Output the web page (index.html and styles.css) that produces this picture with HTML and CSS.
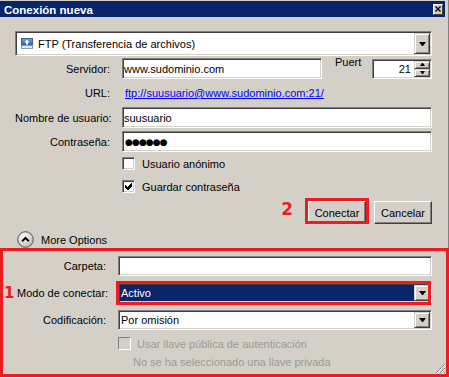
FILE: index.html
```html
<!DOCTYPE html>
<html lang="es">
<head>
    <meta charset="UTF-8">
    <title>Conexión nueva</title>
    <link rel="stylesheet" href="styles.css">
</head>
<body>
    <div class="window">
        <div class="titlebar">
            <span class="title">Conexión nueva</span>
            <span class="close-btn">
                <svg width="6" height="6" viewBox="0 0 6 6"><path d="M0.5 0.5 L5.5 5.5 M5.5 0.5 L0.5 5.5" stroke="#000" stroke-width="1.4"/></svg>
            </span>
        </div>

        <div class="combo protocol">
            <div class="combo-value">
                <svg class="ftp-icon" width="12" height="11" viewBox="0 0 12 11">
                    <defs>
                        <linearGradient id="ftpBlue" x1="0" y1="0" x2="0" y2="1">
                            <stop offset="0" stop-color="#7aa3dc"/>
                            <stop offset="1" stop-color="#2c5ca8"/>
                        </linearGradient>
                    </defs>
                    <rect x="0.5" y="0.5" width="11" height="7" fill="url(#ftpBlue)" stroke="#3a5f9a"/>
                    <rect x="0.5" y="7.5" width="11" height="3" fill="#dfe6ef" stroke="#8a9bb4"/>
                    <path d="M6 1.5 L8.5 4.5 L7 4.5 L7 6.5 L5 6.5 L5 4.5 L3.5 4.5 Z" fill="#fff"/>
                </svg>
                FTP (Transferencia de archivos)
            </div>
            <span class="drop-btn"></span>
        </div>

        <div class="row server-row">
            <span class="label">Servidor:</span>
            <div class="edit server">www.sudominio.com</div>
            <span class="port-label">Puert</span>
            <div class="spinner">
                <span class="spin-value">21</span>
                <span class="spin-btns">
                    <span class="spin-btn up"></span>
                    <span class="spin-btn down"></span>
                </span>
            </div>
        </div>

        <div class="row url-row">
            <span class="label">URL:</span>
            <a class="url" href="#">ftp://suusuario@www.sudominio.com:21/</a>
        </div>

        <div class="row">
            <span class="label">Nombre de usuario:</span>
            <div class="edit wide">suusuario</div>
        </div>

        <div class="row pass-row">
            <span class="label">Contraseña:</span>
            <div class="edit wide password">●●●●●●</div>
        </div>

        <div class="check-row anon">
            <span class="checkbox"></span>
            <span>Usuario anónimo</span>
        </div>
        <div class="check-row save">
            <span class="checkbox">
                <svg width="7" height="7" viewBox="0 0 7 7" shape-rendering="crispEdges"><polygon points="0,2 2,4 6,0 7,0 7,3 3,7 2,7 0,5" fill="#000"/></svg>
            </span>
            <span>Guardar contraseña</span>
        </div>

        <div class="actions">
            <span class="marker marker-two">2</span>
            <button class="btn highlighted">Conectar</button>
            <button class="btn">Cancelar</button>
        </div>

        <div class="more-options">
            <svg class="expander" width="17" height="17" viewBox="0 0 17 17">
                <defs>
                    <radialGradient id="knob" cx="0.4" cy="0.35" r="0.7">
                        <stop offset="0" stop-color="#ffffff"/>
                        <stop offset="1" stop-color="#bdbab4"/>
                    </radialGradient>
                </defs>
                <circle cx="8.5" cy="8.5" r="7.8" fill="url(#knob)" stroke="#55524d" stroke-width="1"/>
                <path d="M5.2 10.2 L8.5 6.9 L11.8 10.2" fill="none" stroke="#000" stroke-width="2"/>
            </svg>
            <span>More Options</span>
        </div>

        <div class="advanced">
            <div class="adv-row folder-row">
                <span class="adv-label">Carpeta:</span>
                <div class="edit adv-field"></div>
            </div>
            <div class="adv-row marked">
                <span class="marker marker-one">1</span>
                <span class="adv-label">Modo de conectar:</span>
                <div class="combo adv-field selected">
                    <div class="combo-value">Activo</div>
                    <span class="drop-btn"></span>
                </div>
            </div>
            <div class="adv-row">
                <span class="adv-label">Codificación:</span>
                <div class="combo adv-field">
                    <div class="combo-value">Por omisión</div>
                    <span class="drop-btn"></span>
                </div>
            </div>
            <div class="key-row">
                <span class="checkbox disabled"></span>
                <span class="disabled-text">Usar llave pública de autenticación</span>
            </div>
            <div class="key-note disabled-text">No se ha seleccionado una llave privada</div>

            <svg class="size-grip" width="11" height="11" viewBox="0 0 11 11">
                <path d="M10 1 L1 10 M10 5 L5 10 M10 9 L9 10" stroke="#808080" stroke-width="1"/>
                <path d="M10 2 L2 10 M10 6 L6 10" stroke="#ffffff" stroke-width="1"/>
            </svg>
        </div>
    </div>
</body>
</html>
```

FILE: styles.css
```css
:root {
    --face: #d4d0c8;
    --shadow: #808080;
    --dark: #404040;
    --highlight: #ffffff;
    --navy: #0a246a;
    --mark: #ed1c24;
}

* {
    box-sizing: border-box;
}

body {
    margin: 0;
    background-color: var(--face);
    font-family: "Liberation Sans", Arial, sans-serif;
    font-size: 11px;
    color: #000;
}

.window {
    width: 449px;
    height: 377px;
    overflow: hidden;
    box-shadow: inset -1px 0 0 var(--shadow);
}

/* title bar */
.titlebar {
    margin-top: 1px;
    width: 445px;
    height: 16px;
    background-color: var(--navy);
    color: #fff;
    display: flex;
    align-items: center;
    justify-content: space-between;
    padding: 0 2px 0 4px;
}

.title {
    font-weight: bold;
    font-size: 11.5px;
    margin-top: 2px;
}

.close-btn {
    width: 10px;
    height: 11px;
    background-color: var(--face);
    border: 1px solid;
    border-color: var(--highlight) var(--dark) var(--dark) var(--highlight);
    display: flex;
    align-items: center;
    justify-content: center;
}

/* sunken fields */
.edit,
.combo,
.spinner {
    background-color: #fff;
    border: 1px solid;
    border-color: var(--shadow) var(--highlight) var(--highlight) var(--shadow);
    box-shadow: inset 1px 1px 0 var(--dark), inset -1px -1px 0 var(--face);
}

.edit {
    height: 21px;
    display: flex;
    align-items: center;
    padding: 0 1px;
    white-space: nowrap;
}

.combo {
    display: flex;
    padding: 1px;
}

.combo-value {
    flex: 1;
    display: flex;
    align-items: center;
    padding-left: 1px;
    white-space: nowrap;
}

.drop-btn,
.spin-btn {
    background-color: var(--face);
    border: 1px solid;
    border-color: var(--face) var(--dark) var(--dark) var(--face);
    box-shadow: inset 1px 1px 0 var(--highlight), inset -1px -1px 0 var(--shadow);
    display: flex;
    align-items: center;
    justify-content: center;
}

.drop-btn {
    width: 16px;
}

.drop-btn::after {
    content: "";
    width: 1px;
    border-left: 3px solid transparent;
    border-right: 3px solid transparent;
    border-top: 4px solid #000;
}

.protocol {
    margin: 14px 0 0 15px;
    width: 417px;
    height: 25px;
}

.ftp-icon {
    margin: 0 5px 0 3px;
}

/* upper form */
.row {
    display: flex;
    align-items: center;
    margin-left: 15px;
    width: 417px;
}

.label {
    width: 95px;
    margin-right: 12px;
    text-align: right;
    white-space: nowrap;
}

.server-row {
    margin-top: 2px;
}

.server {
    width: 200px;
}

.port-label {
    align-self: flex-start;
    margin: -2px 0 0 13px;
}

.spinner {
    margin-left: auto;
    width: 60px;
    height: 20px;
    display: flex;
    padding: 1px;
}

.spin-value {
    flex: 1;
    padding-right: 3px;
    display: flex;
    align-items: center;
    justify-content: flex-end;
}

.spin-btns {
    width: 16px;
    display: flex;
    flex-direction: column;
}

.spin-btn {
    flex: 1;
}

.spin-btn.up::after,
.spin-btn.down::after {
    content: "";
    width: 1px;
    border-left: 2px solid transparent;
    border-right: 2px solid transparent;
}

.spin-btn.up::after {
    border-bottom: 3px solid #000;
}

.spin-btn.down::after {
    border-top: 3px solid #000;
}

.url-row {
    height: 28px;
}

.url {
    margin-left: 3px;
    color: #0000ff;
    text-decoration: underline;
}

.wide {
    flex: 1;
}

.pass-row {
    margin-top: 3px;
}

.password {
    font-family: "DejaVu Sans", sans-serif;
    font-size: 9px;
    letter-spacing: -0.9px;
    padding-left: 2px;
}

.check-row {
    display: flex;
    align-items: center;
    margin-left: 122px;
    height: 13px;
    gap: 7px;
}

.anon {
    margin-top: 5px;
}

.save {
    margin-top: 10px;
}

.checkbox {
    width: 13px;
    height: 13px;
    background-color: #fff;
    border: 1px solid;
    border-color: var(--shadow) var(--highlight) var(--highlight) var(--shadow);
    box-shadow: inset 1px 1px 0 var(--dark), inset -1px -1px 0 var(--face);
    display: flex;
    align-items: center;
    justify-content: center;
}

.checkbox.disabled {
    background-color: var(--face);
}

/* buttons */
.actions {
    margin-top: 8px;
    display: flex;
    justify-content: flex-end;
    align-items: flex-start;
    padding-right: 17px;
    height: 23px;
}

.btn {
    width: 58px;
    height: 23px;
    padding: 0;
    margin-left: 8px;
    font: inherit;
    color: #000;
    background-color: var(--face);
    border: 1px solid;
    border-color: var(--highlight) var(--dark) var(--dark) var(--highlight);
    box-shadow: inset -1px -1px 0 var(--shadow);
}

.highlighted {
    position: relative;
}

.highlighted::after {
    content: "";
    position: absolute;
    top: -4px;
    left: -4px;
    right: -4px;
    bottom: -1px;
    border: 3px solid var(--mark);
}

.marker {
    font-family: "DejaVu Sans", sans-serif;
    font-weight: bold;
    color: var(--mark);
}

.marker-two {
    font-size: 17px;
    line-height: 17px;
    margin-right: 7px;
}

.more-options {
    margin: 7px 0 0 17px;
    display: flex;
    align-items: center;
    gap: 7px;
    height: 17px;
}

/* red-framed advanced part */
.advanced {
    position: relative;
    height: 129px;
    border: 3px solid var(--mark);
}

.adv-row {
    display: flex;
    align-items: center;
    padding-left: 14px;
    margin-top: 7px;
}

.folder-row {
    margin-top: 5px;
}

.adv-label {
    width: 89px;
    margin-right: 12px;
    text-align: right;
    white-space: nowrap;
}

.adv-field {
    width: 314px;
    height: 20px;
}

.marked {
    padding-left: 0;
}

.marker-one {
    width: 14px;
    font-size: 15px;
    padding-left: 1px;
}

.selected {
    position: relative;
}

.selected .combo-value {
    background-color: var(--navy);
    color: #fff;
}

.selected::after {
    content: "";
    position: absolute;
    top: -3px;
    left: -3px;
    right: 0;
    bottom: -3px;
    border: 3px solid var(--mark);
}

.key-row {
    display: flex;
    align-items: center;
    gap: 6px;
    margin: 7px 0 0 115px;
    height: 13px;
}

.key-row .checkbox {
    box-shadow: none;
}

.disabled-text {
    color: #9d9a94;
}

.key-note {
    margin: 6px 0 0 130px;
}

.size-grip {
    position: absolute;
    right: 0;
    bottom: 0;
}
```
